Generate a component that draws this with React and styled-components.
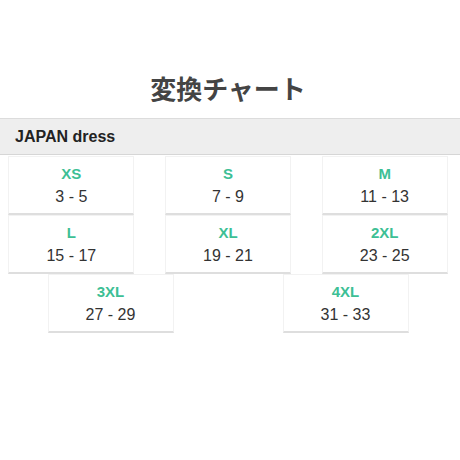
import styled, { createGlobalStyle } from "styled-components";

const GlobalStyle = createGlobalStyle`
  html, body {
    margin: 0;
    padding: 0;
    background: #fff;
    overflow: hidden;
  }
  body {
    font-family: "Liberation Sans", Arial, "Noto Sans CJK JP", sans-serif;
    color: #333;
  }
`;

const Page = styled.div`
  width: 470px;
  margin-left: -7px;
  padding-top: 74px;
`;

const Title = styled.h2`
  margin: 0 0 12px;
  text-align: center;
  font-family: "Liberation Sans", "Noto Sans CJK JP", sans-serif;
  font-size: 26px;
  line-height: 32px;
  font-weight: 700;
  color: #444;
`;

const Section = styled.div`
  background: #eeeeee;
  border-top: 1px solid #dcdcdc;
  border-bottom: 1px solid #d6d6d6;
  height: 35px;
  display: flex;
  align-items: center;
  padding-left: 22px;
  font-size: 16px;
  font-weight: 700;
  color: #222;
`;

const Rows = styled.div`
  display: flex;
  flex-direction: column;
  padding-top: 1px;
`;

const Row = styled.div`
  display: flex;
  justify-content: space-around;
`;

const Cell = styled.div`
  width: 126px;
  height: 59px;
  box-sizing: border-box;
  border: 1px solid #f2f2f2;
  border-bottom: 2px solid #dedede;
  display: flex;
  flex-direction: column;
  align-items: center;
  padding-top: 6px;
`;

const Size = styled.span`
  font-size: 15px;
  line-height: 22px;
  font-weight: 700;
  color: #3dbf95;
`;

const Range = styled.span`
  font-size: 16px;
  line-height: 24px;
  color: #333;
`;

const rows = [
  [["XS", "3 - 5"], ["S", "7 - 9"], ["M", "11 - 13"]],
  [["L", "15 - 17"], ["XL", "19 - 21"], ["2XL", "23 - 25"]],
  [["3XL", "27 - 29"], ["4XL", "31 - 33"]],
];

export default function App() {
  return (
    <>
      <GlobalStyle />
      <Page>
        <Title>変換チャート</Title>
        <Section>JAPAN dress</Section>
        <Rows>
          {rows.map((r, i) => (
            <Row key={i}>
              {r.map(([s, v]) => (
                <Cell key={s}>
                  <Size>{s}</Size>
                  <Range>{v}</Range>
                </Cell>
              ))}
            </Row>
          ))}
        </Rows>
      </Page>
    </>
  );
}
